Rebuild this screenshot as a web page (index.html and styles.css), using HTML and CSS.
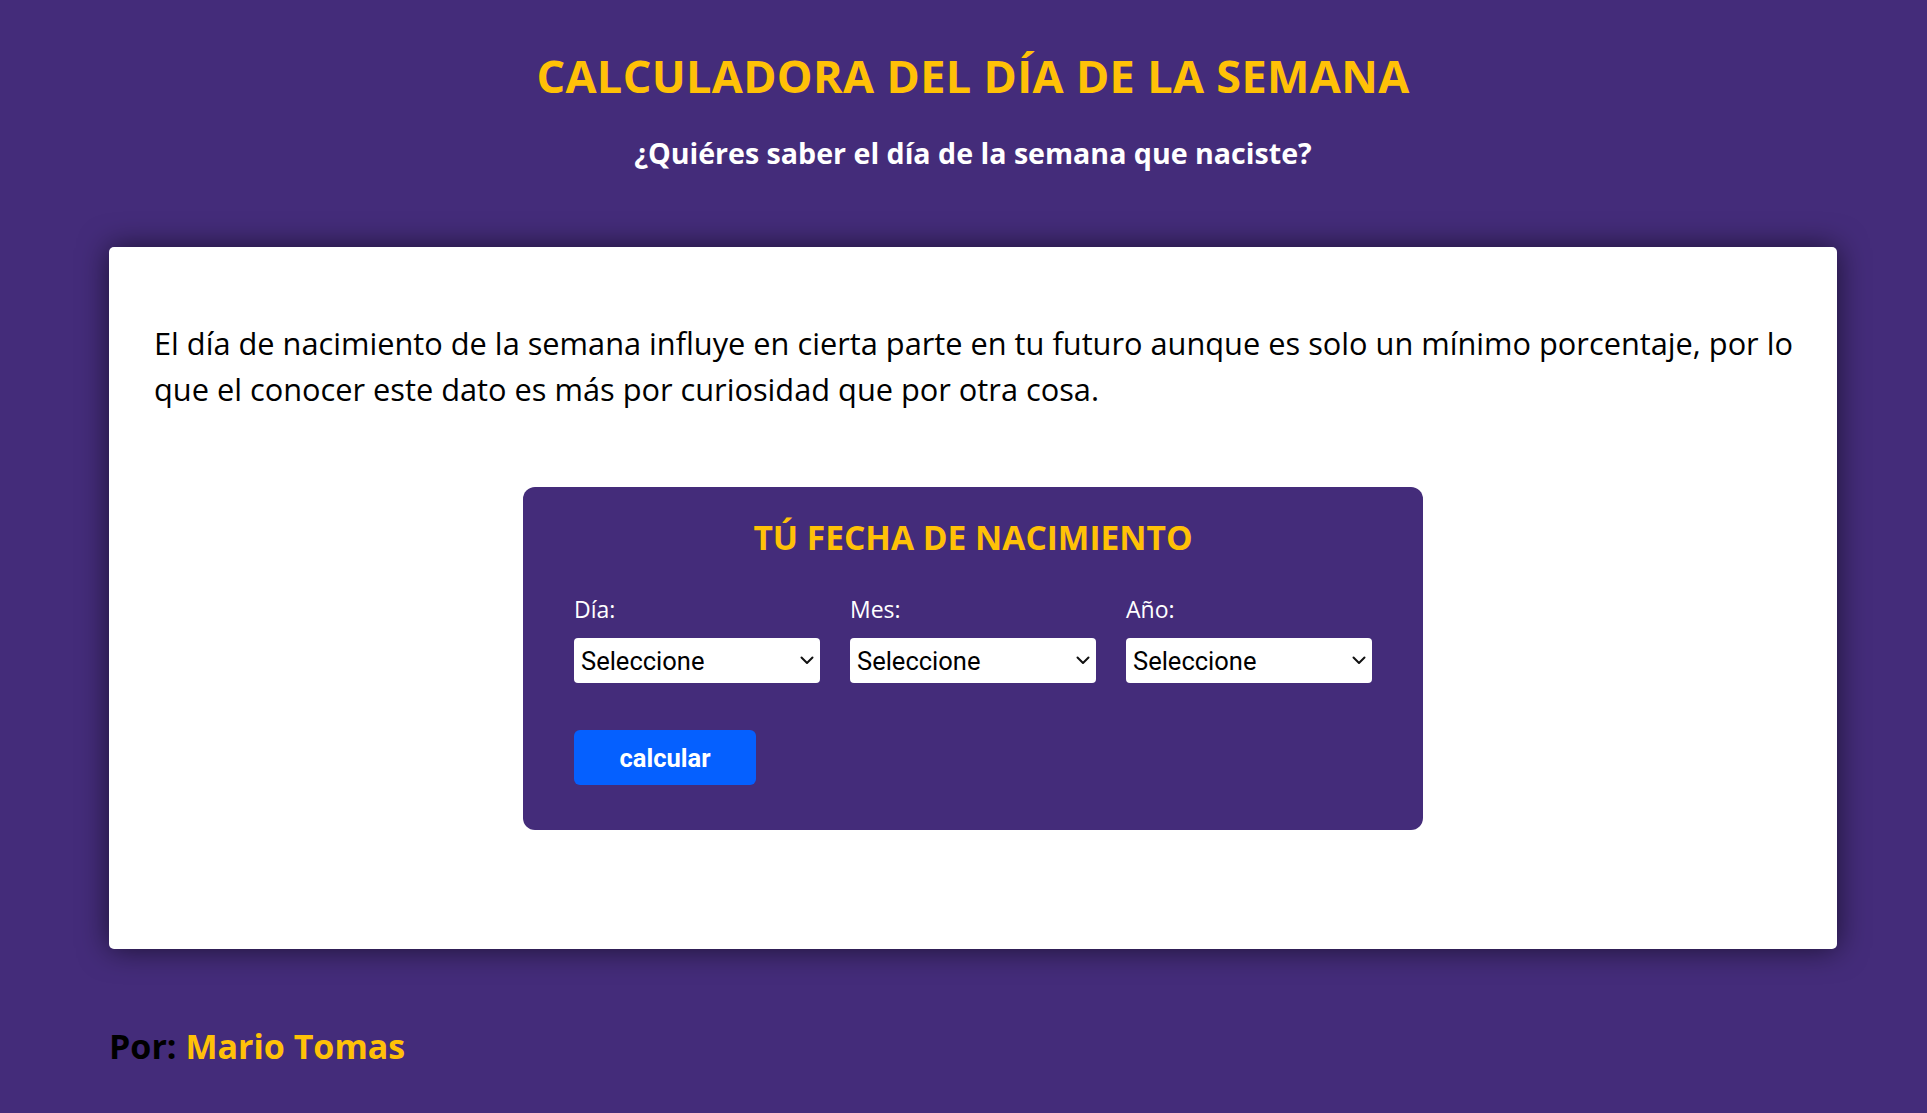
FILE: index.html
```html
<!DOCTYPE html>
<html lang="es">
<head>
<meta charset="utf-8">
<title>Calculadora del día de la semana</title>
<link rel="stylesheet" href="styles.css">
</head>
<body>
<div class="page">
  <header class="header">
    <h1 class="title">CALCULADORA DEL DÍA DE LA SEMANA</h1>
    <p class="subtitle">¿Quiéres saber el día de la semana que naciste?</p>
  </header>

  <main class="card">
    <p class="intro">El día de nacimiento de la semana influye en cierta parte en tu futuro aunque es solo un mínimo porcentaje, por lo que el conocer este dato es más por curiosidad que por otra cosa.</p>

    <form class="form-box">
      <h2 class="form-title">TÚ FECHA DE NACIMIENTO</h2>
      <div class="fields">
        <div class="field">
          <label class="field-label" for="dia">Día:</label>
          <div class="select-wrap">
            <select class="field-select" id="dia"><option>Seleccione</option></select>
            <svg class="chevron" width="14" height="9" viewBox="0 0 14 9" aria-hidden="true"><path d="M1.5 1.5 L7 7 L12.5 1.5" fill="none" stroke="#111" stroke-width="2" stroke-linecap="round" stroke-linejoin="round"/></svg>
          </div>
        </div>
        <div class="field">
          <label class="field-label" for="mes">Mes:</label>
          <div class="select-wrap">
            <select class="field-select" id="mes"><option>Seleccione</option></select>
            <svg class="chevron" width="14" height="9" viewBox="0 0 14 9" aria-hidden="true"><path d="M1.5 1.5 L7 7 L12.5 1.5" fill="none" stroke="#111" stroke-width="2" stroke-linecap="round" stroke-linejoin="round"/></svg>
          </div>
        </div>
        <div class="field">
          <label class="field-label" for="anio">Año:</label>
          <div class="select-wrap">
            <select class="field-select" id="anio"><option>Seleccione</option></select>
            <svg class="chevron" width="14" height="9" viewBox="0 0 14 9" aria-hidden="true"><path d="M1.5 1.5 L7 7 L12.5 1.5" fill="none" stroke="#111" stroke-width="2" stroke-linecap="round" stroke-linejoin="round"/></svg>
          </div>
        </div>
      </div>
      <div class="actions">
        <button type="button" class="btn">calcular</button>
      </div>
    </form>
  </main>

  <footer class="footer">
    <span class="footer-by">Por:</span> <span class="footer-name">Mario Tomas</span>
  </footer>
</div>
</body>
</html>
```
FILE: styles.css
```css
html, body {
  margin: 0;
  padding: 0;
}
body {
  background: #442c7a;
  font-family: "Open Sans", "Noto Sans", sans-serif;
  color: #000;
}
.page {
  padding: 45px 90px 40px 109px;
}
.header {
  text-align: center;
}
.title {
  margin: 0;
  font-size: 45px;
  font-weight: 700;
  line-height: normal;
  color: #ffc107;
  letter-spacing: 0.35px;
}
.subtitle {
  margin: 27px 0 0;
  font-size: 28.6px;
  font-weight: 700;
  line-height: normal;
  color: #ffffff;
}
.card {
  display: block;
  margin-top: 75px;
  background: #ffffff;
  border-radius: 5px;
  box-shadow: 0 0 30px rgba(0, 0, 0, 0.6);
  padding: 45px;
}
.intro {
  margin: 29px -8px 0 0;
  font-size: 30.75px;
  line-height: 45.5px;
  color: #000;
}
.form-box {
  width: 900px;
  box-sizing: border-box;
  margin: 75px auto 74px;
  background: #442c7a;
  border-radius: 12px;
  padding: 27px 51px 45px;
}
.form-title {
  margin: 0;
  text-align: center;
  font-size: 33.5px;
  font-weight: 700;
  line-height: normal;
  color: #ffc107;
}
.fields {
  margin-top: 34px;
  display: grid;
  grid-template-columns: repeat(3, 1fr);
  column-gap: 30px;
}
.field {
  display: flex;
  flex-direction: column;
}
.field-label {
  font-size: 23px;
  line-height: 31px;
  color: #ffffff;
  margin-bottom: 13px;
}
.select-wrap {
  position: relative;
}
.field-select {
  display: block;
  height: 45px;
  width: 100%;
  border: none;
  border-radius: 4px;
  background-color: #ffffff;
  color: #000;
  font-family: Roboto, "Liberation Sans", sans-serif;
  font-size: 25.5px;
  padding: 0 30px 0 7px;
  appearance: none;
  -webkit-appearance: none;
}
.chevron {
  position: absolute;
  right: 6px;
  top: 18px;
  pointer-events: none;
}
.actions {
  margin-top: 47px;
}
.btn {
  display: block;
  height: 55px;
  width: 182px;
  border: none;
  border-radius: 6px;
  background: #0560ff;
  color: #ffffff;
  font-family: Roboto, "Liberation Sans", sans-serif;
  font-size: 25.5px;
  font-weight: 700;
  cursor: pointer;
}
.footer {
  margin-top: 74px;
  font-size: 34px;
  font-weight: 700;
  line-height: normal;
}
.footer-by {
  color: #000;
}
.footer-name {
  color: #ffc107;
}
```
